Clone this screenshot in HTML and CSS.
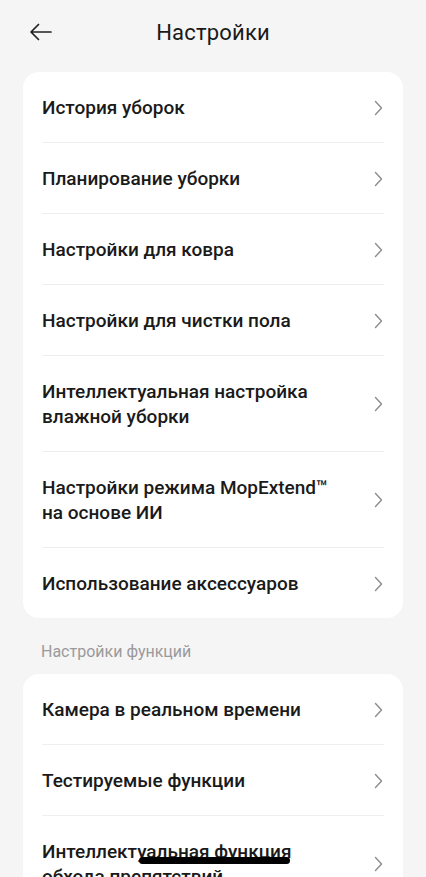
FILE: index.html
```html
<!DOCTYPE html>
<html lang="ru">
<head>
<meta charset="utf-8">
<link rel="stylesheet" href="styles.css">
</head>
<body>
<div class="page">
  <header class="topbar">
    <svg class="back" width="24" height="18" viewBox="0 0 24 18"><path d="M22 9H2.5M9.5 1.5L2 9l7.5 7.5" fill="none" stroke="#222" stroke-width="1.7" stroke-linecap="round" stroke-linejoin="round"/></svg>
    <h1 class="title">Настройки</h1>
  </header>

  <section class="card">
    <div class="row"><span class="label">История уборок</span><svg class="chev" width="9" height="16" viewBox="0 0 9 16"><path d="M1.5 1.5L7.5 8l-6 6.5" fill="none" stroke="#8c8c8c" stroke-width="1.4" stroke-linecap="round" stroke-linejoin="round"/></svg></div>
    <div class="row"><span class="label">Планирование уборки</span><svg class="chev" width="9" height="16" viewBox="0 0 9 16"><path d="M1.5 1.5L7.5 8l-6 6.5" fill="none" stroke="#8c8c8c" stroke-width="1.4" stroke-linecap="round" stroke-linejoin="round"/></svg></div>
    <div class="row"><span class="label">Настройки для ковра</span><svg class="chev" width="9" height="16" viewBox="0 0 9 16"><path d="M1.5 1.5L7.5 8l-6 6.5" fill="none" stroke="#8c8c8c" stroke-width="1.4" stroke-linecap="round" stroke-linejoin="round"/></svg></div>
    <div class="row"><span class="label">Настройки для чистки пола</span><svg class="chev" width="9" height="16" viewBox="0 0 9 16"><path d="M1.5 1.5L7.5 8l-6 6.5" fill="none" stroke="#8c8c8c" stroke-width="1.4" stroke-linecap="round" stroke-linejoin="round"/></svg></div>
    <div class="row"><span class="label">Интеллектуальная настройка<br>влажной уборки</span><svg class="chev" width="9" height="16" viewBox="0 0 9 16"><path d="M1.5 1.5L7.5 8l-6 6.5" fill="none" stroke="#8c8c8c" stroke-width="1.4" stroke-linecap="round" stroke-linejoin="round"/></svg></div>
    <div class="row"><span class="label">Настройки режима MopExtend™<br>на основе ИИ</span><svg class="chev" width="9" height="16" viewBox="0 0 9 16"><path d="M1.5 1.5L7.5 8l-6 6.5" fill="none" stroke="#8c8c8c" stroke-width="1.4" stroke-linecap="round" stroke-linejoin="round"/></svg></div>
    <div class="row"><span class="label">Использование аксессуаров</span><svg class="chev" width="9" height="16" viewBox="0 0 9 16"><path d="M1.5 1.5L7.5 8l-6 6.5" fill="none" stroke="#8c8c8c" stroke-width="1.4" stroke-linecap="round" stroke-linejoin="round"/></svg></div>
  </section>

  <h2 class="section-title">Настройки функций</h2>

  <section class="card">
    <div class="row"><span class="label">Камера в реальном времени</span><svg class="chev" width="9" height="16" viewBox="0 0 9 16"><path d="M1.5 1.5L7.5 8l-6 6.5" fill="none" stroke="#8c8c8c" stroke-width="1.4" stroke-linecap="round" stroke-linejoin="round"/></svg></div>
    <div class="row"><span class="label">Тестируемые функции</span><svg class="chev" width="9" height="16" viewBox="0 0 9 16"><path d="M1.5 1.5L7.5 8l-6 6.5" fill="none" stroke="#8c8c8c" stroke-width="1.4" stroke-linecap="round" stroke-linejoin="round"/></svg></div>
    <div class="row"><span class="label">Интеллектуальная функция<br>обхода препятствий</span><svg class="chev" width="9" height="16" viewBox="0 0 9 16"><path d="M1.5 1.5L7.5 8l-6 6.5" fill="none" stroke="#8c8c8c" stroke-width="1.4" stroke-linecap="round" stroke-linejoin="round"/></svg></div>
  </section>
</div>
<div class="home-indicator"></div>
</body>
</html>
```

FILE: styles.css
```css
html, body {
  margin: 0;
  padding: 0;
  background: #f5f5f5;
  height: 100%;
  overflow: hidden;
}
body {
  font-family: Roboto, "Noto Sans", sans-serif;
  color: #1a1a1a;
}
.page {
  padding: 0 23px;
}
.topbar {
  position: relative;
  height: 64px;
  display: flex;
  align-items: center;
  justify-content: center;
}
.back {
  position: absolute;
  left: 6px;
  top: 23px;
}
.title {
  margin: 0;
  font-size: 22px;
  font-weight: 400;
  color: #1a1a1a;
  letter-spacing: 0.2px;
}
.card {
  margin-top: 8px;
  background: #fff;
  border-radius: 16px;
  padding: 0 19px;
}
.row {
  display: flex;
  align-items: center;
  justify-content: space-between;
  padding: 23px 0 22px;
  border-bottom: 1px solid #eeeeee;
}
.row:last-child {
  border-bottom: none;
}
.label {
  font-size: 19px;
  line-height: 25px;
  font-weight: 500;
  color: #1a1a1a;
}
.chev {
  flex: none;
  margin-right: 1px;
}
.section-title {
  margin: 24px 0 -8px 18px;
  height: 32px;
  font-size: 16px;
  line-height: 20px;
  font-weight: 400;
  color: #9a9a9a;
}
.home-indicator {
  position: fixed;
  left: 139px;
  bottom: 13px;
  width: 151px;
  height: 7px;
  border-radius: 4px;
  background: #000;
}
```
